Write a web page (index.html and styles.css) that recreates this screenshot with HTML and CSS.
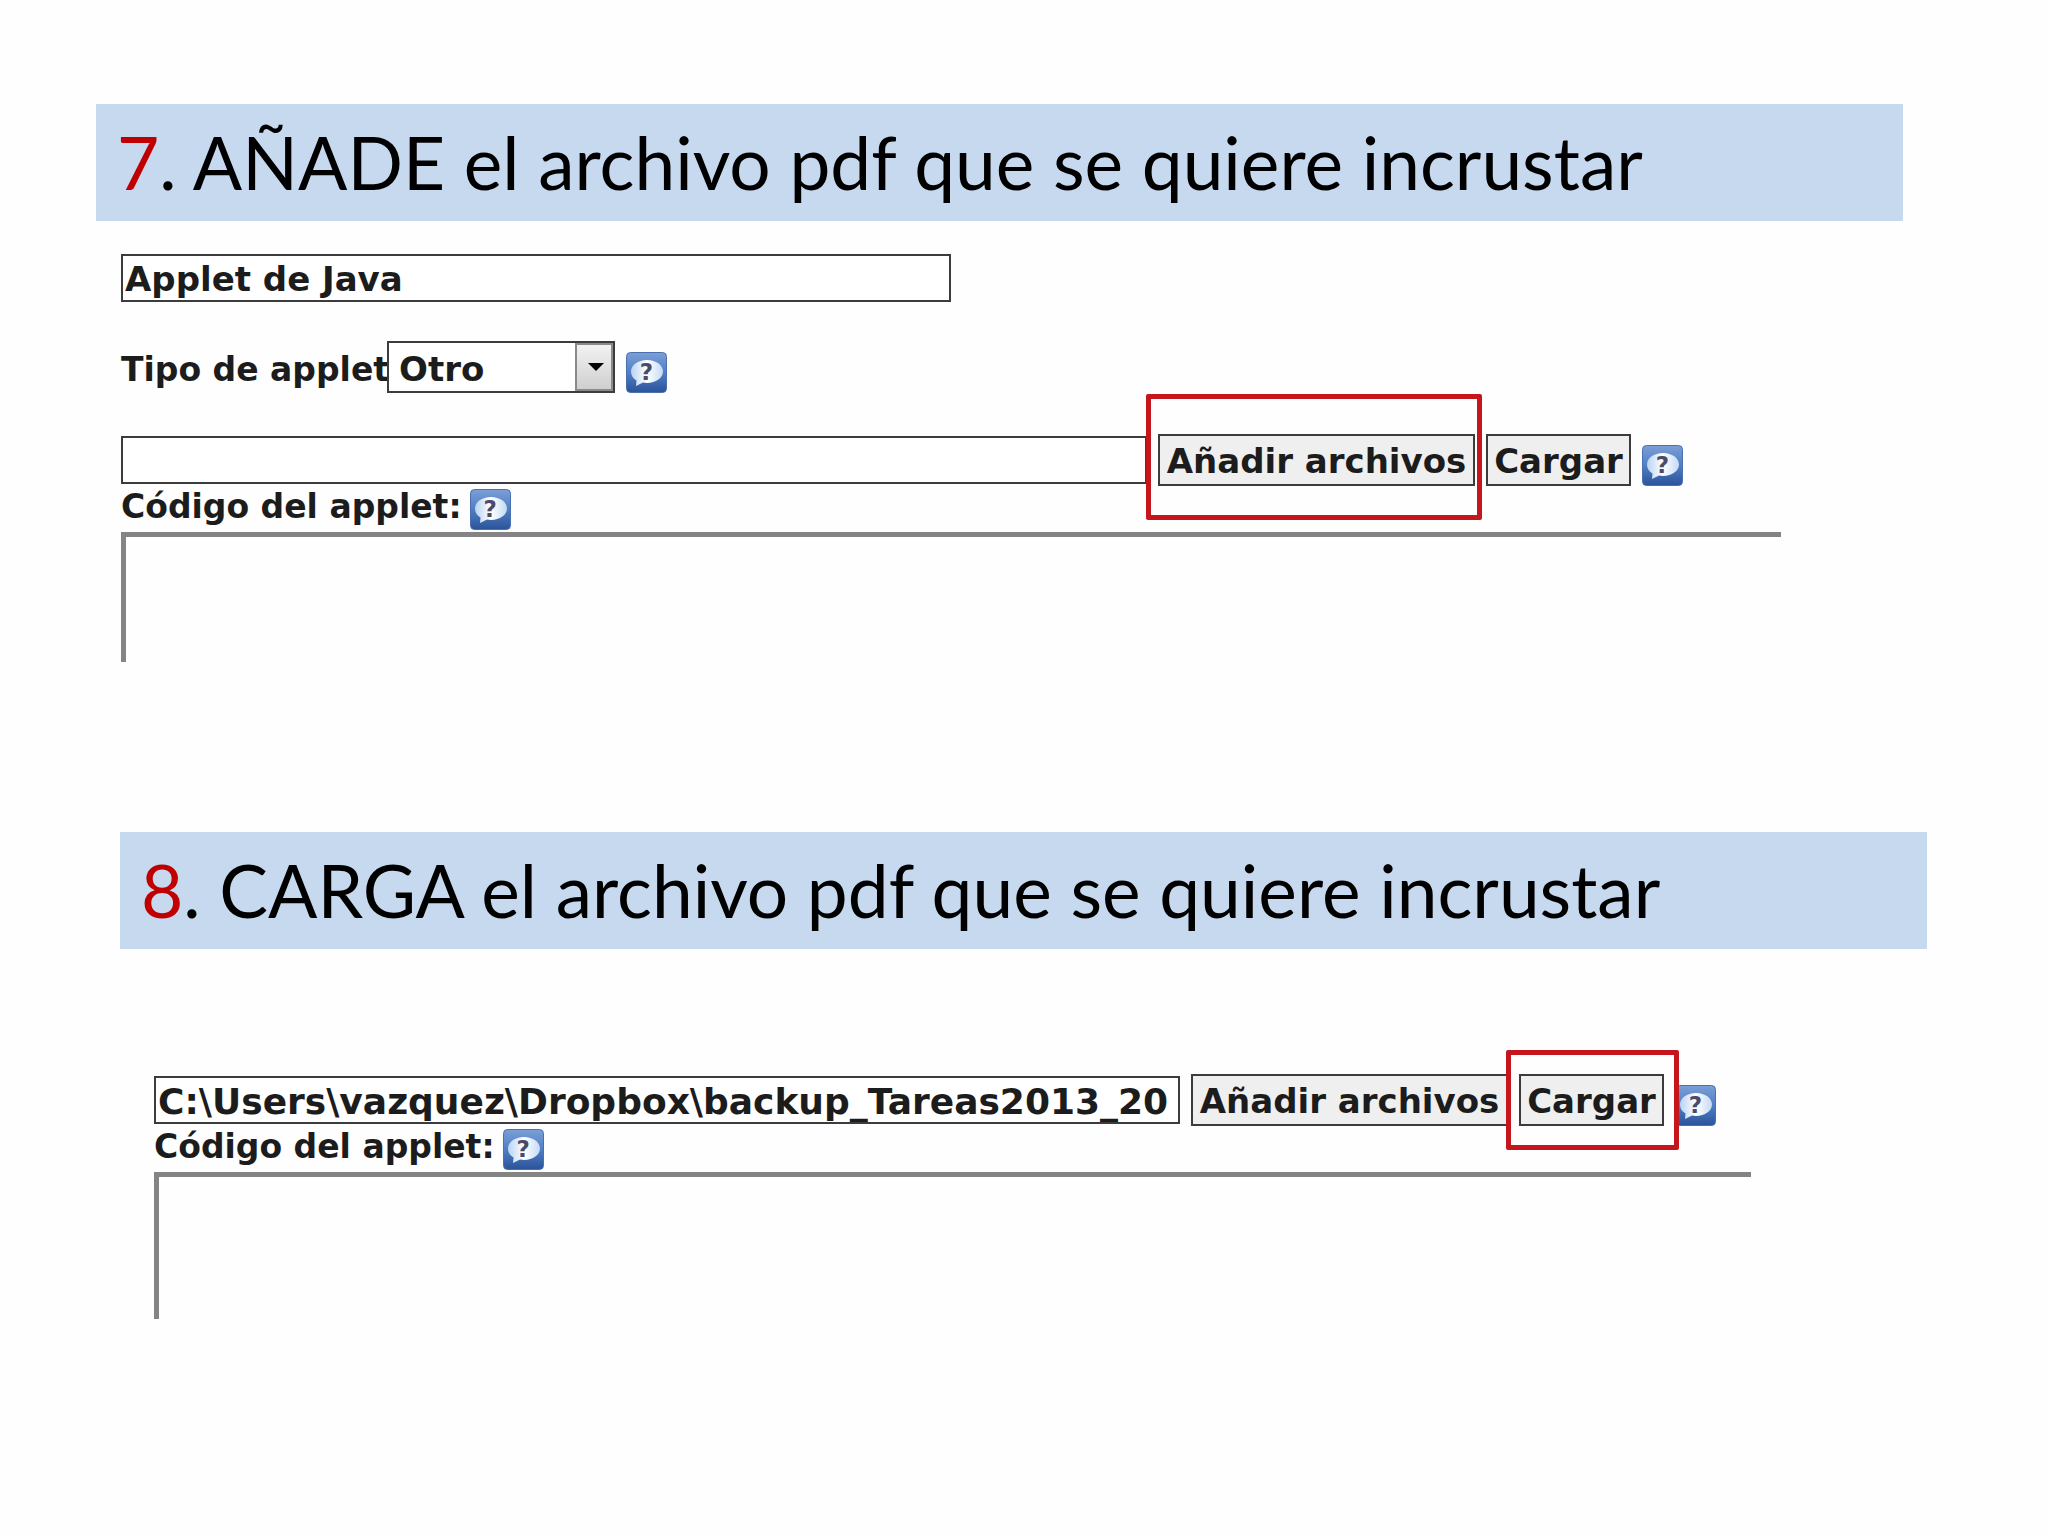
FILE: index.html
```html
<!DOCTYPE html>
<html lang="es">
<head>
  <meta charset="UTF-8" />
  <meta name="viewport" content="width=device-width, initial-scale=1.0"/>
  <title>Applet de Java</title>
  <link rel="stylesheet" href="styles.css">
</head>
<body>

  <!-- Icono de ayuda compartido -->
  <svg class="sprite" aria-hidden="true">
    <defs>
      <linearGradient id="help-bg" x1="0" y1="0" x2="0" y2="1">
        <stop offset="0" stop-color="#7c9fd6"/>
        <stop offset="0.5" stop-color="#4f7fc6"/>
        <stop offset="1" stop-color="#2b5399"/>
      </linearGradient>
      <linearGradient id="help-bubble" x1="0" y1="0" x2="1" y2="0">
        <stop offset="0" stop-color="#b9d3f3"/>
        <stop offset="0.5" stop-color="#ffffff"/>
        <stop offset="1" stop-color="#c4daf5"/>
      </linearGradient>
    </defs>
    <symbol id="help" viewBox="0 0 41 41">
      <rect x="0.5" y="0.5" width="40" height="40" rx="4" fill="url(#help-bg)" stroke="#4a70b0"/>
      <path d="M21 8C12 8 5 13 5 19.500c0 4 2 7 5.500 9L10 34l7-3.500c1.300.3 2.600.4 4 .4 9 0 16-5 16-11.400S30 8 21 8z" fill="url(#help-bubble)"/>
    </symbol>
  </svg>

  <!-- Paso 7 -->
  <section class="step step-add">
    <h2 class="step-title"><span class="num">7</span>. AÑADE el archivo pdf que se quiere incrustar</h2>
    <form class="applet-form">
      <input class="field name" type="text" value="Applet de Java" aria-label="Nombre">

      <div class="row type-row">
        <label class="type-label" for="type">Tipo de applet</label>
        <span class="select">
          <select id="type">
            <option>Otro</option>
          </select>
        </span>
        <button type="button" class="help" aria-label="Ayuda"><svg><use href="#help"/></svg><span>?</span></button>
      </div>

      <div class="row">
        <input class="field path" type="text" aria-label="Archivo">
        <span class="marked mark-add"><button type="button" class="btn btn-add">Añadir archivos</button></span>
        <button type="button" class="btn btn-load">Cargar</button>
        <button type="button" class="help" aria-label="Ayuda"><svg><use href="#help"/></svg><span>?</span></button>
      </div>

      <div class="row code-row">
        <label for="code-add">Código del applet:</label>
        <button type="button" class="help" aria-label="Ayuda"><svg><use href="#help"/></svg><span>?</span></button>
      </div>
      <textarea class="code" id="code-add"></textarea>
    </form>
  </section>

  <!-- Paso 8 -->
  <section class="step step-load">
    <h2 class="step-title"><span class="num">8</span>. CARGA el archivo pdf que se quiere incrustar</h2>
    <form class="applet-form">
      <div class="row">
        <input class="field path" type="text" value="C:\Users\vazquez\Dropbox\backup_Tareas2013_20" aria-label="Archivo">
        <button type="button" class="btn btn-add">Añadir archivos</button>
        <span class="marked mark-load"><button type="button" class="btn btn-load">Cargar</button></span>
        <button type="button" class="help" aria-label="Ayuda"><svg><use href="#help"/></svg><span>?</span></button>
      </div>

      <div class="row code-row">
        <label for="code-load">Código del applet:</label>
        <button type="button" class="help" aria-label="Ayuda"><svg><use href="#help"/></svg><span>?</span></button>
      </div>
      <textarea class="code" id="code-load"></textarea>
    </form>
  </section>

</body>
</html>
```

FILE: styles.css
```css
* {
  margin: 0;
  padding: 0;
  box-sizing: border-box;
}

body {
  padding-top: 104px;
  background-color: #fefefe;
  color: #1c1c1c;
  font-family: "DejaVu Sans", Verdana, sans-serif;
}

.sprite {
  position: absolute;
  width: 0;
  height: 0;
}

/* Pasos */
.step-add {
  margin: 0 145px 0 96px;
}

.step-load {
  margin: 170px 121px 0 120px;
}

.step-title {
  padding-left: 21px;
  background-color: #c7d9ef;
  color: #000;
  font-family: Lato, Carlito, sans-serif;
  font-size: 73px;
  font-weight: 400;
  line-height: 117px;
  white-space: nowrap;
}

.num {
  color: #c00000;
}

/* Formulario */
.applet-form {
  font-size: 33px;
  font-weight: bold;
}

.field,
.select select,
.btn {
  color: inherit;
  font-family: inherit;
  font-size: 34px;
  font-weight: bold;
}

.step-add .applet-form {
  margin: 33px 122px 0 25px;
}

.step-load .applet-form {
  margin: 125px 176px 0 34px;
}

.row {
  display: flex;
  align-items: center;
  gap: 11px;
  height: 52px;
}

.field {
  height: 48px;
  padding: 2px 2px 0;
  border: 2px solid #3c3c3c;
  border-radius: 0;
  background-color: #fff;
}

.name {
  display: block;
  width: 50%;
}

.path {
  flex: 0 1 1026px;
  min-width: 0;
  font-size: 36px;
}

.type-row {
  margin: 39px 0 41px;
}

.type-label {
  width: 266px;
  margin-right: -11px;
  padding-top: 4px;
  white-space: nowrap;
}

/* Lista desplegable */
.select {
  position: relative;
  width: 228px;
  height: 52px;
}

.select select {
  width: 100%;
  height: 100%;
  padding: 3px 0 0 10px;
  border: 2px solid #3c3c3c;
  border-radius: 0;
  background-color: #fff;
  appearance: none;
}

.select::before {
  content: "";
  position: absolute;
  top: 2px;
  right: 2px;
  bottom: 2px;
  width: 34px;
  border: 2px solid #8a8a8a;
  background: linear-gradient(#f2f2f2, #cfcfcf);
  pointer-events: none;
}

.select::after {
  content: "";
  position: absolute;
  top: 22px;
  right: 11px;
  border: 8px solid transparent;
  border-top-color: #000;
  border-bottom: 0;
  pointer-events: none;
}

/* Botones */
.btn {
  flex: none;
  height: 52px;
  padding-top: 2px;
  border: 2px solid #3c3c3c;
  background-color: #efefef;
  white-space: nowrap;
}

.btn-add {
  width: 317px;
}

.btn-load {
  width: 145px;
}

.help {
  position: relative;
  flex: none;
  align-self: flex-end;
  width: 41px;
  height: 41px;
  border: 0;
  background: none;
  color: #4a4a6a;
  font-family: inherit;
  font-size: 23px;
  font-weight: bold;
}

.help svg {
  display: block;
  width: 100%;
  height: 100%;
}

.help span {
  position: absolute;
  inset: 0;
  line-height: 40px;
}

/* Marco rojo sobre el botón que hay que pulsar */
.marked {
  position: relative;
  display: flex;
  flex: none;
  z-index: 1;
}

.marked::after {
  content: "";
  position: absolute;
  border: 5px solid #c4161c;
  border-radius: 2px;
  pointer-events: none;
}

.mark-add::after {
  inset: -40px -7px -34px -12px;
}

.mark-load::after {
  inset: -24px -15px -24px -13px;
}

/* Código del applet */
.code-row {
  gap: 8px;
  height: 44px;
}

.code-row label {
  padding-bottom: 4px;
}

.code {
  display: block;
  width: 100%;
  height: 130px;
  margin-top: 2px;
  border: solid #848484;
  border-width: 5px 0 0 5px;
  background-color: #fefefe;
  resize: none;
  outline: none;
}

.step-load .code {
  height: 147px;
}
```
